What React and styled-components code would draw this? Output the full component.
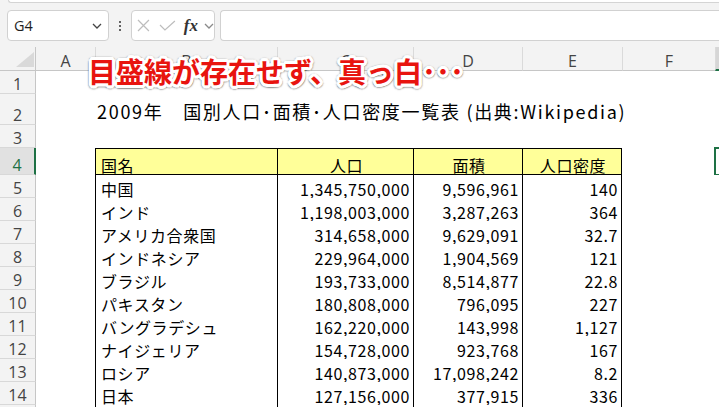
import React from "react";
import styled, { createGlobalStyle } from "styled-components";

const GlobalStyle = createGlobalStyle`
  html, body {
    margin: 0;
    padding: 0;
    width: 719px;
    height: 407px;
    overflow: hidden;
    background: #f3f3f3;
  }
`;

const outline = (() => {
  const parts = [];
  for (let i = 0; i < 16; i++) {
    const a = (i / 16) * Math.PI * 2;
    parts.push(`${(Math.cos(a) * 3).toFixed(2)}px ${(Math.sin(a) * 3).toFixed(2)}px 0 #fff`);
  }
  for (let i = 0; i < 8; i++) {
    const a = (i / 8) * Math.PI * 2;
    parts.push(`${(Math.cos(a) * 3.5).toFixed(2)}px ${(Math.sin(a) * 3.5 + 0.5).toFixed(2)}px 1.5px rgba(0,0,0,0.35)`);
  }
  return parts.join(", ");
})();

const Page = styled.div`
  position: relative;
  width: 719px;
  height: 407px;
  overflow: hidden;
  background: #f3f3f3;
  font-family: "Noto Sans CJK JP", sans-serif;
`;

const RibbonEdge = styled.div`
  height: 2px;
  margin-left: 8px;
  background: #fff;
  border: 1px solid #d4d4d4;
  border-top: none;
  border-right: none;
  border-bottom-left-radius: 6px;
`;

const FormulaBar = styled.div`
  display: flex;
  height: 31px;
  margin-top: 7px;
  padding-left: 7px;
`;

const Box = styled.div`
  box-sizing: border-box;
  height: 31px;
  background: #fff;
  border: 1px solid #d1d1d1;
  border-radius: 4px;
  display: flex;
  align-items: center;
`;

const NameBox = styled(Box)`
  width: 102px;
  justify-content: space-between;
  padding: 0 6px 0 6px;
  font-family: "Open Sans", sans-serif;
  font-size: 14.5px;
  color: #1f1f1f;
`;

const Kebab = styled.div`
  width: 22px;
  display: flex;
  flex-direction: column;
  align-items: center;
  justify-content: center;
  gap: 2px;

  span {
    width: 2px;
    height: 2px;
    border-radius: 1px;
    background: #333;
  }
`;

const FuncBox = styled(Box)`
  width: 84px;
  padding-left: 5px;
`;

const Fx = styled.span`
  margin-left: 8px;
  font-family: "Liberation Serif", serif;
  font-style: italic;
  font-weight: 700;
  font-size: 17px;
  color: #333;
  line-height: 1;
`;

const FormulaInput = styled(Box)`
  flex: 1;
  margin-left: 5px;
  border-right: none;
  border-radius: 4px 0 0 4px;
`;

const Sheet = styled.div`
  display: grid;
  grid-template-columns: 36px 59px 182px 136px 109px 100px 93px 90px;
  grid-template-rows: 24px 23px 31px 23px 27px repeat(11, 23px);
  margin-top: 6px;
  background: #fff;
`;

const Corner = styled.div`
  box-sizing: border-box;
  background: #f3f3f3;
  border-right: 1px solid #c6c6c6;
  border-bottom: 1px solid #c6c6c6;
  display: flex;
  align-items: flex-end;
  justify-content: flex-end;
  padding: 0 1px 3px 0;
`;

const ColHeader = styled.div`
  box-sizing: border-box;
  display: flex;
  align-items: flex-end;
  justify-content: center;
  padding-bottom: 1px;
  background: ${(p) => (p.$selected ? "#d6d6d6" : "#f3f3f3")};
  border-left: ${(p) => (p.$first ? "none" : "1px solid #dadada")};
  border-bottom: ${(p) => (p.$selected ? "2px solid #1e7145" : "1px solid #c6c6c6")};
  font-family: "Open Sans", sans-serif;
  font-size: 16px;
  line-height: 1;
  color: #444;
`;

const RowHeader = styled.div`
  box-sizing: border-box;
  display: flex;
  align-items: flex-end;
  justify-content: center;
  padding-bottom: 1px;
  background: ${(p) => (p.$selected ? "#e1e1e1" : "#f3f3f3")};
  border-right: ${(p) => (p.$selected ? "2px solid #1e7145" : "1px solid #c6c6c6")};
  border-bottom: 1px solid #d8d8d8;
  font-family: "Open Sans", sans-serif;
  font-size: 16px;
  line-height: 1;
  color: ${(p) => (p.$selected ? "#1e7145" : "#444")};
`;

const Cell = styled.div`
  position: relative;
  box-sizing: border-box;
  min-width: 0;
  display: flex;
  align-items: flex-end;
  justify-content: ${(p) =>
    p.$align === "right" ? "flex-end" : p.$align === "center" ? "center" : "flex-start"};
  padding: 0 3px 1px 5px;
  background: ${(p) => p.$fill || "#fff"};
  border-left: ${(p) => (p.$bl ? "1px solid #000" : "none")};
  border-right: ${(p) => (p.$br ? "1px solid #000" : "none")};
  border-top: ${(p) => (p.$bt ? "1px solid #000" : "none")};
  border-bottom: ${(p) => (p.$bb ? "1px solid #000" : "none")};
  font-size: 16px;
  line-height: 16px;
  letter-spacing: 0.6px;
  color: #000;
  white-space: nowrap;

  ${(p) =>
    p.$active &&
    `&::after {
      content: "";
      position: absolute;
      top: -1px;
      left: -1px;
      right: -1px;
      bottom: -1px;
      border: 2px solid #1e7145;
    }`}
`;

const TitleCell = styled.div`
  grid-column: 3 / span 5;
  display: flex;
  align-items: flex-end;
  padding: 0 0 5px 2px;
  font-size: 18px;
  line-height: 18px;
  letter-spacing: 1.7px;
  color: #000;
  white-space: nowrap;
`;

const Annotation = styled.div`
  position: absolute;
  left: 88px;
  top: 57px;
  font-family: "Noto Sans CJK JP", sans-serif;
  font-weight: 700;
  font-size: 28px;
  line-height: 1;
  color: #e8140f;
  white-space: nowrap;
  text-shadow: ${outline};
`;

const Chevron = ({ color = "#444" }) => (
  <svg width="10" height="6" viewBox="0 0 10 6">
    <polyline points="1,1 5,5 9,1" fill="none" stroke={color} strokeWidth="1.3" />
  </svg>
);

const CancelIcon = () => (
  <svg width="13" height="13" viewBox="0 0 13 13">
    <path d="M1 1 L12 12 M12 1 L1 12" stroke="#bdbdbd" strokeWidth="1.2" />
  </svg>
);

const CheckIcon = () => (
  <svg width="17" height="11" viewBox="0 0 17 11" style={{ marginLeft: 9 }}>
    <polyline points="1,5 6,10 16,1" fill="none" stroke="#bdbdbd" strokeWidth="1.2" />
  </svg>
);

const CornerTriangle = () => (
  <svg width="18" height="15" viewBox="0 0 18 15">
    <polygon points="18,0 18,15 0,15" fill="#d9d9d9" />
  </svg>
);

const COLS = ["A", "B", "C", "D", "E", "F", "G"];

const rows = [
  ["中国", "1,345,750,000", "9,596,961", "140"],
  ["インド", "1,198,003,000", "3,287,263", "364"],
  ["アメリカ合衆国", "314,658,000", "9,629,091", "32.7"],
  ["インドネシア", "229,964,000", "1,904,569", "121"],
  ["ブラジル", "193,733,000", "8,514,877", "22.8"],
  ["パキスタン", "180,808,000", "796,095", "227"],
  ["バングラデシュ", "162,220,000", "143,998", "1,127"],
  ["ナイジェリア", "154,728,000", "923,768", "167"],
  ["ロシア", "140,873,000", "17,098,242", "8.2"],
  ["日本", "127,156,000", "377,915", "336"],
  ["", "", "", ""],
];

const headers = [
  { text: "国名", align: "left" },
  { text: "人口", align: "center" },
  { text: "面積", align: "center" },
  { text: "人口密度", align: "center" },
];

function SheetRow({ n }) {
  const cells = [<RowHeader key="h" $selected={n === 4}>{n}</RowHeader>, <Cell key="a" />];

  if (n === 2) {
    cells.push(
      <TitleCell key="t">2009年　国別人口･面積･人口密度一覧表 (出典:Wikipedia)</TitleCell>
    );
  } else if (n === 4) {
    headers.forEach((h, i) =>
      cells.push(
        <Cell key={i} $fill="#ffff99" $align={h.align} $bl $bt $bb $br={i === 3}>
          {h.text}
        </Cell>
      )
    );
    cells.push(<Cell key="f" />);
  } else if (n >= 5) {
    const r = rows[n - 5];
    r.forEach((v, i) =>
      cells.push(
        <Cell key={i} $align={i === 0 ? "left" : "right"} $bl $br={i === 3}>
          {v}
        </Cell>
      )
    );
    cells.push(<Cell key="f" />);
  } else {
    ["b", "c", "d", "e", "f"].forEach((k) => cells.push(<Cell key={k} />));
  }

  cells.push(<Cell key="g" $active={n === 4} />);
  return cells;
}

export default function App() {
  return (
    <Page>
      <GlobalStyle />
      <RibbonEdge />
      <FormulaBar>
        <NameBox>
          <span>G4</span>
          <Chevron />
        </NameBox>
        <Kebab>
          <span />
          <span />
          <span />
        </Kebab>
        <FuncBox>
          <CancelIcon />
          <CheckIcon />
          <Fx>fx</Fx>
          <span style={{ marginLeft: 6, display: "flex" }}>
            <Chevron color="#8a8a8a" />
          </span>
        </FuncBox>
        <FormulaInput />
      </FormulaBar>
      <Sheet>
        <Corner>
          <CornerTriangle />
        </Corner>
        {COLS.map((c, i) => (
          <ColHeader key={c} $first={i === 0} $selected={c === "G"}>
            {c}
          </ColHeader>
        ))}
        {Array.from({ length: 15 }, (_, i) => (
          <SheetRow key={i} n={i + 1} />
        ))}
      </Sheet>
      <Annotation>目盛線が存在せず、真っ白･･･</Annotation>
    </Page>
  );
}
